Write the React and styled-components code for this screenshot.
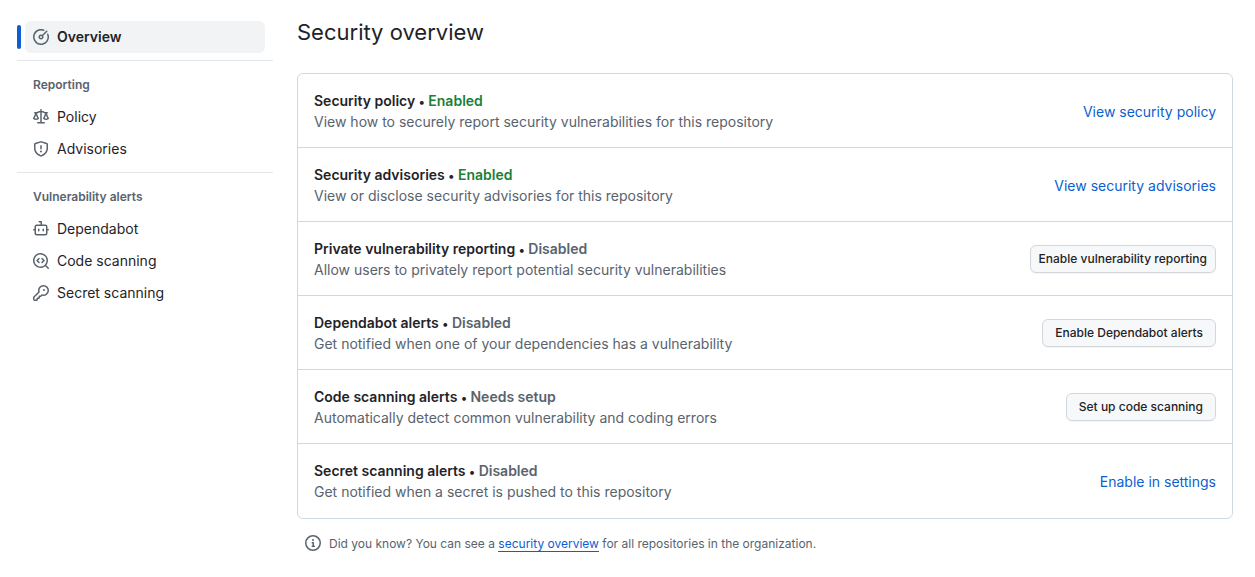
import React from "react";
import styled, { createGlobalStyle } from "styled-components";

const colors = {
  fg: "#1f2328",
  muted: "#59636e",
  link: "#0b5fd0",
  success: "#1a7f37",
  border: "#d1d9e0",
};

const GlobalStyle = createGlobalStyle`
  *, *::before, *::after { box-sizing: border-box; }
  body {
    margin: 0;
    background: #fff;
    color: ${colors.fg};
    font-family: Inter, "Liberation Sans", sans-serif;
    font-size: 14px;
    line-height: 21px;
  }
`;

const Page = styled.div`
  display: flex;
  align-items: flex-start;
  gap: 24px;
  padding: 0 22px 16px 17px;
`;

const Sidebar = styled.nav`
  flex: 0 0 256px;
  padding-top: 21px;
`;

const NavList = styled.ul`
  list-style: none;
  margin: 0;
  padding: 0 8px;
`;

const NavLink = styled.a`
  position: relative;
  display: flex;
  align-items: center;
  gap: 8px;
  height: 32px;
  padding: 0 8px;
  border-radius: 6px;
  color: ${colors.fg};
  line-height: 20px;
  text-decoration: none;
  font-weight: ${(p) => (p.$current ? 600 : 400)};
  background: ${(p) => (p.$current ? "#f2f3f5" : "transparent")};

  &::before {
    content: "";
    display: ${(p) => (p.$current ? "block" : "none")};
    position: absolute;
    left: -8px;
    top: 4px;
    width: 4px;
    height: 24px;
    border-radius: 6px;
    background: ${colors.link};
  }
`;

const Divider = styled.hr`
  height: 1px;
  margin: 7px 0 8px;
  border: 0;
  background: #e2e5e9;
`;

const GroupTitle = styled.h2`
  margin: 0;
  padding: 0 16px;
  font-size: 12px;
  line-height: 32px;
  font-weight: 600;
  color: ${colors.muted};
`;

const Svg = styled.svg`
  flex: none;
  width: 16px;
  height: 16px;
  fill: ${colors.muted};
`;

const Main = styled.main`
  flex: 1;
  min-width: 0;
`;

const Title = styled.h1`
  margin: 0;
  padding: 16px 0 25px;
  font-size: 22px;
  line-height: 32px;
  font-weight: 400;
`;

const Box = styled.ul`
  list-style: none;
  margin: 0;
  padding: 0;
  border: 1px solid ${colors.border};
  border-radius: 6px;
`;

const Row = styled.li`
  display: flex;
  align-items: center;
  justify-content: space-between;
  gap: 16px;
  padding: 16px 16px 15px;

  & + & {
    border-top: 1px solid ${colors.border};
  }
  &:last-child {
    padding-bottom: 16px;
  }
`;

const RowTitle = styled.h3`
  margin: 0;
  font-size: 14px;
  line-height: 21px;
  font-weight: 600;
`;

const Bullet = styled.span`
  font-size: 12px;
  line-height: 12px;
`;

const Status = styled.span`
  color: ${(p) => (p.$enabled ? colors.success : colors.muted)};
`;

const RowText = styled.p`
  margin: 0;
  color: ${colors.muted};
`;

const ActionLink = styled.a`
  flex: none;
  color: ${colors.link};
  text-decoration: none;
`;

const Button = styled.button`
  flex: none;
  height: 28px;
  padding: 0 ${(p) => (p.$compact ? 8 : 12)}px;
  border: 1px solid #d3d7dc;
  border-radius: 6px;
  background: #f6f8fa;
  color: ${colors.fg};
  font: 500 12px/20px Inter, "Liberation Sans", sans-serif;
  box-shadow: 0 1px 0 rgba(31, 35, 40, 0.04);
`;

const Tip = styled.p`
  display: flex;
  align-items: flex-start;
  gap: 8px;
  margin: 16px 8px 0;
  font-size: 12px;
  line-height: 18px;
  color: ${colors.muted};
`;

const InlineLink = styled.a`
  color: ${colors.link};
  text-decoration: none;
  border-bottom: 1px solid ${colors.link};
`;

const paths = {
  meter:
    "M8 1.5a6.5 6.5 0 1 0 6.016 4.035.75.75 0 0 1 1.388-.57 8 8 0 1 1-4.37-4.37.75.75 0 1 1-.569 1.389A6.479 6.479 0 0 0 8 1.5Zm6.28.22a.75.75 0 0 1 0 1.06l-4.063 4.064a2.5 2.5 0 1 1-1.06-1.06L13.22 1.72a.75.75 0 0 1 1.06 0ZM7 8a1 1 0 1 0 2 0 1 1 0 0 0-2 0Z",
  law:
    "M8.75.75V2h.985c.304 0 .603.08.867.231l1.29.736c.038.022.08.033.124.033h2.234a.75.75 0 0 1 0 1.5h-.427l2.111 4.692a.75.75 0 0 1-.154.838l-.53-.53.529.531-.001.002-.002.002-.006.006-.006.005-.01.01-.045.04c-.21.176-.441.327-.686.45C14.556 10.78 13.88 11 13 11a4.498 4.498 0 0 1-2.023-.454 3.544 3.544 0 0 1-.686-.45l-.045-.04-.016-.015-.006-.006-.004-.004v-.001a.75.75 0 0 1-.154-.838L12.178 4.5h-.162c-.305 0-.604-.079-.868-.231l-1.29-.736a.245.245 0 0 0-.124-.033H8.75V13h2.5a.75.75 0 0 1 0 1.5h-6.5a.75.75 0 0 1 0-1.5h2.5V3.5h-.984a.245.245 0 0 0-.124.033l-1.289.737c-.265.15-.564.23-.869.23h-.162l2.112 4.692a.75.75 0 0 1-.154.838l-.53-.53.529.531-.001.002-.002.002-.006.006-.016.015-.045.04c-.21.176-.441.327-.686.45C4.556 10.78 3.88 11 3 11a4.498 4.498 0 0 1-2.023-.454 3.544 3.544 0 0 1-.686-.45l-.045-.04-.016-.015-.006-.006-.004-.004v-.001a.75.75 0 0 1-.154-.838L2.178 4.5H1.75a.75.75 0 0 1 0-1.5h2.234a.249.249 0 0 0 .125-.033l1.288-.737c.265-.15.564-.23.869-.23h.984V.75a.75.75 0 0 1 1.5 0Zm2.945 8.477c.285.135.718.273 1.305.273s1.02-.138 1.305-.273L13 6.327Zm-10 0c.285.135.718.273 1.305.273s1.02-.138 1.305-.273L3 6.327Z",
  shield:
    "M7.467.133a1.748 1.748 0 0 1 1.066 0l5.25 1.68A1.75 1.75 0 0 1 15 3.48V7c0 1.566-.32 3.182-1.303 4.682-.983 1.498-2.585 2.813-5.032 3.855a1.697 1.697 0 0 1-1.33 0c-2.447-1.042-4.049-2.357-5.032-3.855C1.32 10.182 1 8.566 1 7V3.48a1.755 1.755 0 0 1 1.217-1.667Zm.61 1.429a.25.25 0 0 0-.153 0l-5.25 1.68a.25.25 0 0 0-.174.238V7c0 1.358.275 2.666 1.057 3.86.784 1.194 2.121 2.34 4.366 3.297a.196.196 0 0 0 .154 0c2.245-.956 3.582-2.104 4.366-3.298C13.225 9.666 13.5 8.36 13.5 7V3.48a.251.251 0 0 0-.174-.237l-5.25-1.68ZM8.75 4.75v3a.75.75 0 0 1-1.5 0v-3a.75.75 0 0 1 1.5 0ZM9 10.5a1 1 0 1 1-2 0 1 1 0 0 1 2 0Z",
  dependabot:
    "M5.75 7.5a.75.75 0 0 1 .75.75v1.5a.75.75 0 0 1-1.5 0v-1.5a.75.75 0 0 1 .75-.75Zm5.25.75a.75.75 0 0 0-1.5 0v1.5a.75.75 0 0 0 1.5 0v-1.5ZM6.25 0h2A.75.75 0 0 1 9 .75V3.5h3.25a2.25 2.25 0 0 1 2.25 2.25V8h.75a.75.75 0 0 1 0 1.5h-.75v2.75a2.25 2.25 0 0 1-2.25 2.25h-8.5a2.25 2.25 0 0 1-2.25-2.25V9.5H.75a.75.75 0 0 1 0-1.5h.75V5.75A2.25 2.25 0 0 1 3.75 3.5H7.5v-2H6.25a.75.75 0 0 1 0-1.5ZM3 5.75v6.5c0 .414.336.75.75.75h8.5a.75.75 0 0 0 .75-.75v-6.5a.75.75 0 0 0-.75-.75h-8.5a.75.75 0 0 0-.75.75Z",
  codescan:
    "M8.47 4.97a.75.75 0 0 0 0 1.06L9.94 7.5 8.47 8.97a.75.75 0 1 0 1.06 1.06l2-2a.75.75 0 0 0 0-1.06l-2-2a.75.75 0 0 0-1.06 0ZM6.53 6.03a.75.75 0 0 0-1.06-1.06l-2 2a.75.75 0 0 0 0 1.06l2 2a.75.75 0 1 0 1.06-1.06L5.06 7.5l1.47-1.47ZM12.246 13.307a7.501 7.501 0 1 1 1.06-1.06l2.474 2.473a.749.749 0 0 1-.326 1.275.749.749 0 0 1-.734-.215ZM1.5 7.5a6.002 6.002 0 0 0 3.608 5.504 6.002 6.002 0 0 0 6.486-1.117.748.748 0 0 1 .292-.293A6 6 0 1 0 1.5 7.5Z",
  key:
    "M10.5 0a5.499 5.499 0 1 1-1.288 10.848l-.932.932a.749.749 0 0 1-.53.22H7v.75a.749.749 0 0 1-.22.53l-.5.5a.749.749 0 0 1-.53.22H5v.75a.749.749 0 0 1-.22.53l-.5.5a.749.749 0 0 1-.53.22h-2A1.75 1.75 0 0 1 0 14.25v-2c0-.199.079-.389.22-.53l4.932-4.932A5.5 5.5 0 0 1 10.5 0Zm-4 5.5c-.001.431.069.86.205 1.269a.75.75 0 0 1-.181.768L1.5 12.56v1.69c0 .138.112.25.25.25h1.69l.06-.06v-1.19a.75.75 0 0 1 .75-.75h1.19l.06-.06v-1.19a.75.75 0 0 1 .75-.75h1.19l1.023-1.025a.75.75 0 0 1 .768-.18A4 4 0 1 0 6.5 5.5ZM11 6a1 1 0 1 1 0-2 1 1 0 0 1 0 2Z",
  info:
    "M0 8a8 8 0 1 1 16 0A8 8 0 0 1 0 8Zm8-6.5a6.5 6.5 0 1 0 0 13 6.5 6.5 0 0 0 0-13ZM6.5 7.75A.75.75 0 0 1 7.25 7h1a.75.75 0 0 1 .75.75v2.75h.25a.75.75 0 0 1 0 1.5h-2a.75.75 0 0 1 0-1.5h.25v-2h-.25a.75.75 0 0 1-.75-.75ZM8 6a1 1 0 1 1 0-2 1 1 0 0 1 0 2Z",
};

function Icon({ name }) {
  return (
    <Svg viewBox="0 0 16 16" aria-hidden="true">
      <path d={paths[name]} />
    </Svg>
  );
}

const groups = [
  { items: [{ icon: "meter", label: "Overview", current: true }] },
  {
    title: "Reporting",
    items: [
      { icon: "law", label: "Policy" },
      { icon: "shield", label: "Advisories" },
    ],
  },
  {
    title: "Vulnerability alerts",
    items: [
      { icon: "dependabot", label: "Dependabot" },
      { icon: "codescan", label: "Code scanning" },
      { icon: "key", label: "Secret scanning" },
    ],
  },
];

const rows = [
  {
    title: "Security policy",
    status: "Enabled",
    text: "View how to securely report security vulnerabilities for this repository",
    link: "View security policy",
  },
  {
    title: "Security advisories",
    status: "Enabled",
    text: "View or disclose security advisories for this repository",
    link: "View security advisories",
  },
  {
    title: "Private vulnerability reporting",
    status: "Disabled",
    text: "Allow users to privately report potential security vulnerabilities",
    button: "Enable vulnerability reporting",
    compact: true,
  },
  {
    title: "Dependabot alerts",
    status: "Disabled",
    text: "Get notified when one of your dependencies has a vulnerability",
    button: "Enable Dependabot alerts",
  },
  {
    title: "Code scanning alerts",
    status: "Needs setup",
    text: "Automatically detect common vulnerability and coding errors",
    button: "Set up code scanning",
  },
  {
    title: "Secret scanning alerts",
    status: "Disabled",
    text: "Get notified when a secret is pushed to this repository",
    link: "Enable in settings",
  },
];

export default function App() {
  return (
    <>
      <GlobalStyle />
      <Page>
        <Sidebar aria-label="Security">
          {groups.map((group, i) => (
            <React.Fragment key={i}>
              {i > 0 && <Divider />}
              {group.title && <GroupTitle>{group.title}</GroupTitle>}
              <NavList>
                {group.items.map((item) => (
                  <li key={item.label}>
                    <NavLink
                      href="#"
                      $current={item.current}
                      aria-current={item.current ? "page" : undefined}
                    >
                      <Icon name={item.icon} />
                      {item.label}
                    </NavLink>
                  </li>
                ))}
              </NavList>
            </React.Fragment>
          ))}
        </Sidebar>
        <Main>
          <Title>Security overview</Title>
          <Box>
            {rows.map((row) => (
              <Row key={row.title}>
                <div>
                  <RowTitle>
                    {row.title} <Bullet>•</Bullet>{" "}
                    <Status $enabled={row.status === "Enabled"}>{row.status}</Status>
                  </RowTitle>
                  <RowText>{row.text}</RowText>
                </div>
                {row.link ? (
                  <ActionLink href="#">{row.link}</ActionLink>
                ) : (
                  <Button type="button" $compact={row.compact}>
                    {row.button}
                  </Button>
                )}
              </Row>
            ))}
          </Box>
          <Tip>
            <Icon name="info" />
            <span>
              Did you know? You can see a <InlineLink href="#">security overview</InlineLink> for
              all repositories in the organization.
            </span>
          </Tip>
        </Main>
      </Page>
    </>
  );
}
